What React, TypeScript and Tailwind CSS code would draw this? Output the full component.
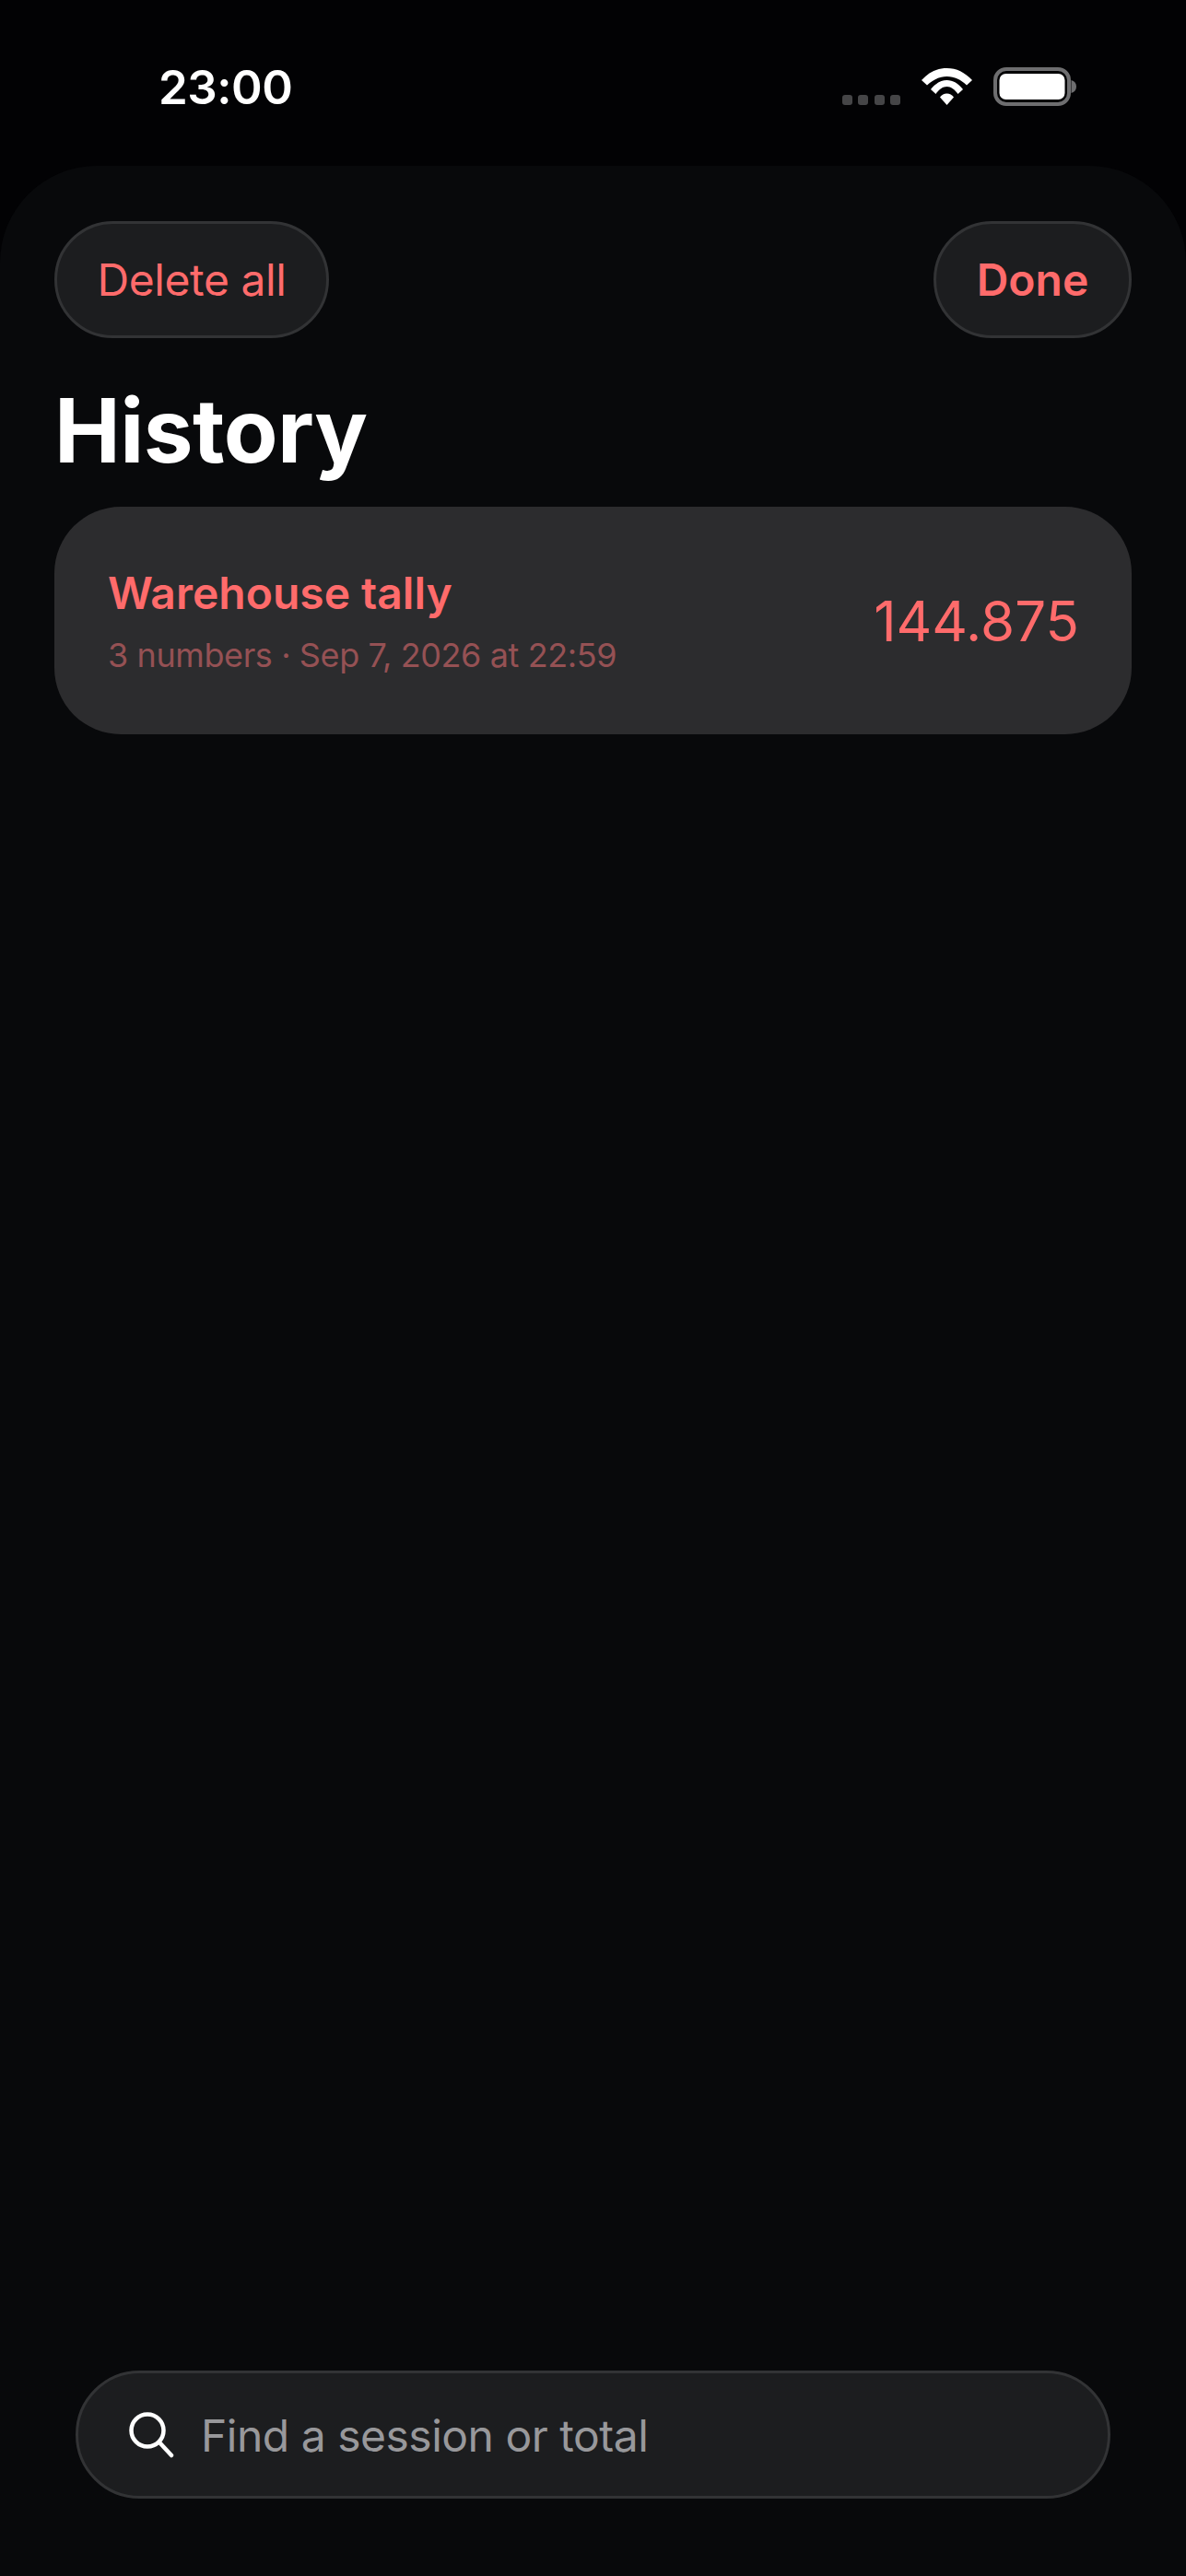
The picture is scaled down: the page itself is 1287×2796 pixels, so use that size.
import React from "react";

const font = { fontFamily: "Inter, 'Liberation Sans', sans-serif" };

function Wifi() {
  return (
    <svg width="55" height="40" viewBox="0 0 55 40" fill="#fff" className="block">
      <path d="M0 13C8 4.5 17 0 27.5 0C38 0 47 4.5 55 13L49 18.5C42.5 12.5 36 9 27.5 9C19 9 12.5 12.5 6 18.5Z" />
      <path d="M10 23C15 16.5 21 13 27.5 13C34 13 40 16.5 45 23L39.5 28C36 23 32 20 27.5 20C23 20 19 23 15.5 28Z" />
      <path d="M20 31.5C22 29 24.5 27.5 27.5 27.5C30.5 27.5 33 29 35 31.5L27.5 40Z" />
    </svg>
  );
}

function Battery() {
  return (
    <svg width="90" height="42" viewBox="0 0 90 42" fill="none" className="block">
      <rect x="2" y="2" width="80" height="38" rx="12" stroke="#6e6e70" strokeWidth="4" />
      <rect x="6.5" y="7" width="71" height="28" rx="7" fill="#fff" />
      <path d="M84.5 14C88 15 90 17.5 90 21C90 24.5 88 27 84.5 28Z" fill="#6e6e70" />
    </svg>
  );
}

function Search() {
  return (
    <svg width="50" height="50" viewBox="0 0 50 50" fill="none" className="block">
      <circle cx="20" cy="20" r="17.5" stroke="#fff" strokeWidth="4.5" />
      <path d="M33 33L46 47" stroke="#fff" strokeWidth="4.5" strokeLinecap="round" />
    </svg>
  );
}

export default function App() {
  return (
    <div className="flex h-[2796px] w-[1287px] flex-col overflow-hidden bg-[#020204] text-white" style={font}>
      <header className="flex h-[180px] shrink-0 items-start justify-between pl-[172px] pr-[119px]">
        <span className="mt-[62px] text-[51px] font-semibold leading-[66px] tracking-[-0.5px]">23:00</span>
        <div className="mt-[73px] flex items-start">
          <div className="mt-[30px] flex gap-[6.5px]">
            <span className="h-[11px] w-[11px] rounded-[3px] bg-[#454547]" />
            <span className="h-[11px] w-[11px] rounded-[3px] bg-[#454547]" />
            <span className="h-[11px] w-[11px] rounded-[3px] bg-[#454547]" />
            <span className="h-[11px] w-[11px] rounded-[3px] bg-[#454547]" />
          </div>
          <div className="ml-[23px] mt-[1px]"><Wifi /></div>
          <div className="ml-[23px]"><Battery /></div>
        </div>
      </header>

      <main className="flex min-h-0 flex-1 flex-col rounded-t-[105px] bg-[#08090b] px-[59px] pt-[60px]">
        <div className="flex items-center justify-between">
          <button className="h-[127px] w-[298px] rounded-[64px] border-[3px] border-[#323335] bg-[#1c1d1f] text-[48px] tracking-[-0.4px] text-[#ff6b6b]">
            Delete all
          </button>
          <button className="h-[127px] w-[215px] rounded-[64px] border-[3px] border-[#323335] bg-[#1c1d1f] text-[48px] font-semibold text-[#ff6b6b]">
            Done
          </button>
        </div>

        <h1 className="mt-[42px] text-[96px] font-bold leading-[116px] tracking-[-0.5px]">History</h1>

        <section className="mt-[25px] flex h-[247px] items-center justify-between rounded-[72px] bg-[#2c2c2e] pl-[58px] pr-[57px]">
          <div>
            <div className="text-[48px] font-semibold leading-[58px] text-[#ff6b6b]">Warehouse tally</div>
            <div className="mt-[16px] text-[36px] leading-[44px] tracking-[-0.4px] text-[#955154]">3 numbers · Sep 7, 2026 at 22:59</div>
          </div>
          <div className="text-[60px] leading-[72px] text-[#ff6b6b]">144.875</div>
        </section>

        <div className="mt-auto mb-[84px] flex h-[139px] w-[1123px] items-center gap-[28px] self-center rounded-[70px] border-[3px] border-[#323335] bg-[#1c1d1f] pl-[55px]">
          <Search />
          <span className="pt-[3px] text-[48px] tracking-[-0.5px] text-[#98989b]">Find a session or total</span>
        </div>
      </main>
    </div>
  );
}
